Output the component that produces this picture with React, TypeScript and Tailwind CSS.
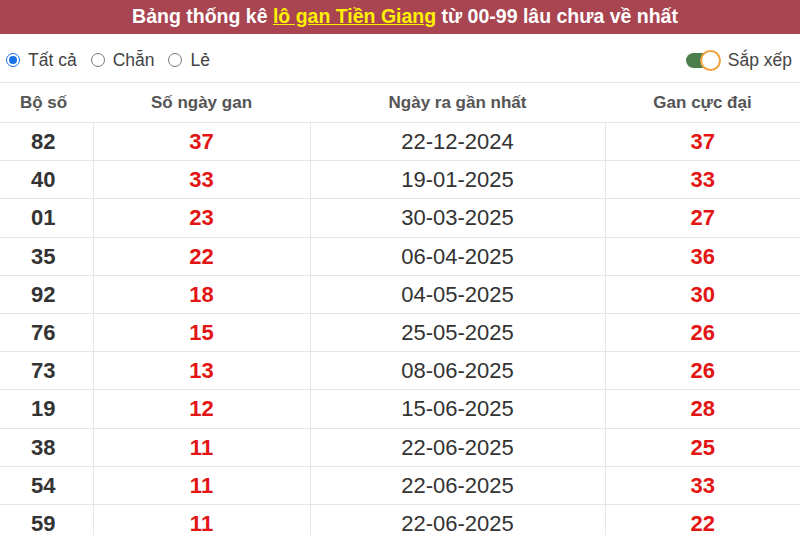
import React from 'react';

const rows: [string, number, string, number][] = [
  ['82', 37, '22-12-2024', 37],
  ['40', 33, '19-01-2025', 33],
  ['01', 23, '30-03-2025', 27],
  ['35', 22, '06-04-2025', 36],
  ['92', 18, '04-05-2025', 30],
  ['76', 15, '25-05-2025', 26],
  ['73', 13, '08-06-2025', 26],
  ['19', 12, '15-06-2025', 28],
  ['38', 11, '22-06-2025', 25],
  ['54', 11, '22-06-2025', 33],
  ['59', 11, '22-06-2025', 22],
];

const Radio = ({ checked, label }: { checked?: boolean; label: string }) => (
  <label className="flex items-center gap-[8px]">
    {checked ? (
      <span className="w-[14px] h-[14px] rounded-full border border-[#1a73e8] flex items-center justify-center">
        <span className="w-[8px] h-[8px] rounded-full bg-[#1a73e8]" />
      </span>
    ) : (
      <span className="w-[14px] h-[14px] rounded-full border border-[#777]" />
    )}
    <span>{label}</span>
  </label>
);

export default function App() {
  return (
    <div className="w-[800px] h-[535px] overflow-hidden bg-white font-['Liberation_Sans',Arial,sans-serif] text-[#333]">
      <div className="h-[34px] pl-[10px] bg-[#a94451] flex items-center justify-center text-white font-bold text-[19.5px]">
        Bảng thống kê&nbsp;<span className="text-[#fff200] underline">lô gan Tiền Giang</span>&nbsp;từ 00-99 lâu chưa về nhất
      </div>

      <div className="h-[48px] pt-[4px] flex items-center justify-between pl-[6px] pr-[8px] text-[17.5px] text-[#444]">
        <div className="flex items-center gap-[14px]">
          <Radio checked label="Tất cả" />
          <Radio label="Chẵn" />
          <Radio label="Lẻ" />
        </div>
        <div className="flex items-center gap-[7px]">
          <div className="relative w-[35px] h-[21px]">
            <div className="absolute left-0 top-[3px] w-[30px] h-[15px] rounded-full bg-[#4c7d4c]" />
            <div className="absolute right-0 top-0 w-[21px] h-[21px] rounded-full bg-white border-2 border-[#f0a33c]" />
          </div>
          <span>Sắp xếp</span>
        </div>
      </div>

      <table className="w-full border-collapse table-fixed">
        <colgroup>
          <col className="w-[93px]" />
          <col className="w-[217px]" />
          <col className="w-[295px]" />
          <col />
        </colgroup>
        <thead>
          <tr className="h-[40px] border-t border-b border-[#e6e6e6] text-[17px] font-bold text-[#555]">
            <th className="font-bold pr-[6px]">Bộ số</th>
            <th className="font-bold">Số ngày gan</th>
            <th className="font-bold">Ngày ra gần nhất</th>
            <th className="font-bold">Gan cực đại</th>
          </tr>
        </thead>
        <tbody>
          {rows.map(([num, days, date, max]) => (
            <tr key={num} className="h-[38.2px] border-b border-[#e6e6e6] text-[22px] text-center">
              <td className="font-bold text-[#333] border-r border-[#e6e6e6] pr-[6px]">{num}</td>
              <td className="font-bold text-[#e31414] border-r border-[#e6e6e6]">{days}</td>
              <td className="text-[#333] border-r border-[#e6e6e6]">{date}</td>
              <td className="font-bold text-[#e31414]">{max}</td>
            </tr>
          ))}
        </tbody>
      </table>
    </div>
  );
}
